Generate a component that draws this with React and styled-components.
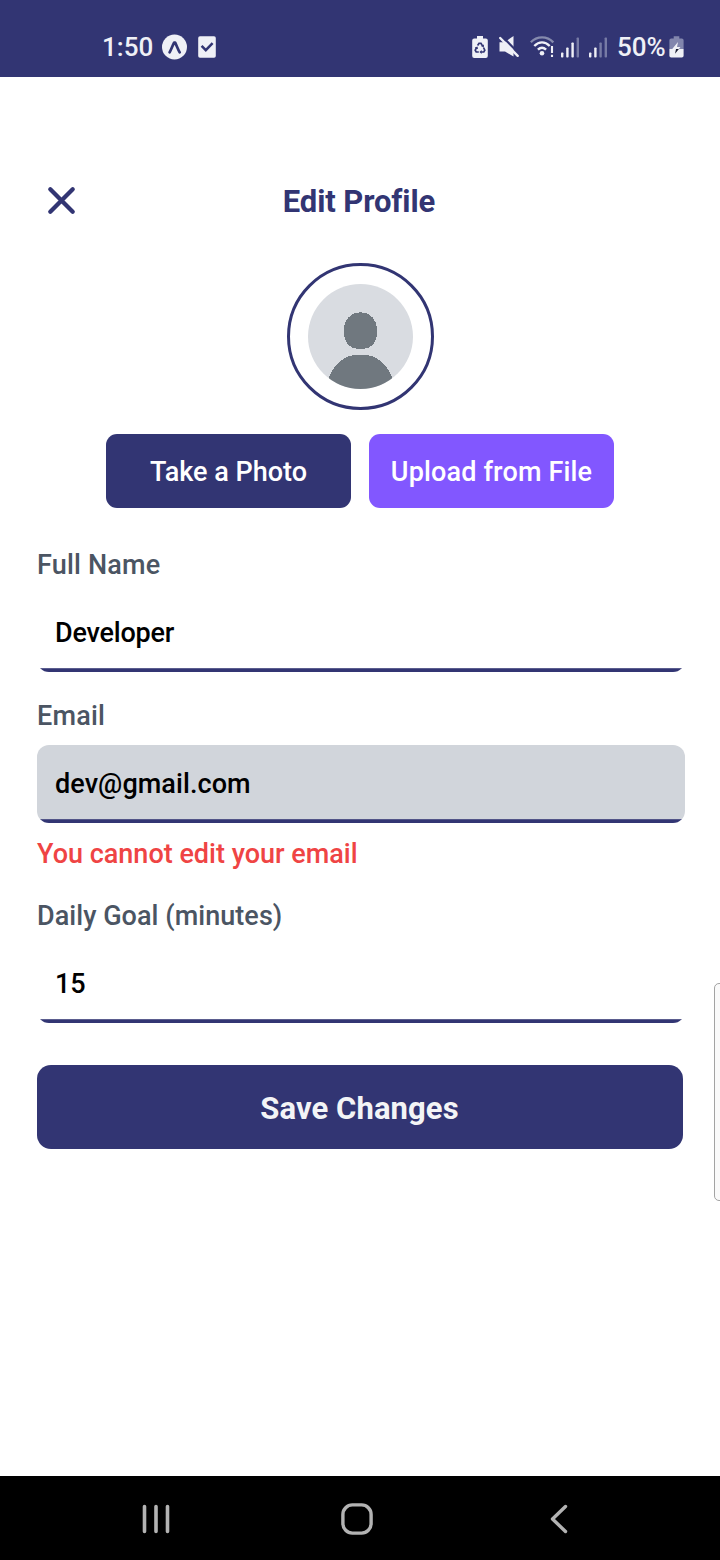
import React from "react";
import styled, { createGlobalStyle } from "styled-components";

const navy = "#323573";
const ink = "#eff0f6";

const GlobalStyle = createGlobalStyle`
  *, *::before, *::after { box-sizing: border-box; }
  body { margin: 0; background: #fff; font-family: Roboto, "Noto Sans", sans-serif; }
  svg { display: block; flex: none; }
`;

const Screen = styled.div`
  position: relative;
  display: flex;
  flex-direction: column;
  width: 720px;
  height: 1560px;
  background: #fff;
  overflow: hidden;
`;

const StatusBar = styled.header`
  display: flex;
  justify-content: space-between;
  height: 77px;
  padding: 32px 36px 15px 102px;
  background: ${navy};
  color: ${ink};
`;

const StatusGroup = styled.div`
  display: flex;
  align-items: center;
  height: 30px;
`;

const StatusText = styled.span`
  width: ${(p) => p.$width}px;
  margin-right: ${(p) => p.$after}px;
  font-size: 26px;
  font-weight: 500;
  line-height: 30px;
  white-space: nowrap;
`;

const StatusIcon = styled.svg`
  margin-right: ${(p) => p.$after || 0}px;
`;

const Content = styled.main`
  flex: 1;
  display: flex;
  flex-direction: column;
  padding: 103px 35px 0 37px;
`;

const TitleRow = styled.div`
  display: grid;
  grid-template-columns: 50px 1fr 50px;
  height: 42px;
  padding-right: 4px;
`;

const CloseButton = styled.button`
  display: flex;
  align-items: flex-start;
  padding: 6px 0 0 10px;
  border: 0;
  background: none;
`;

const Title = styled.h1`
  margin: 0;
  color: ${navy};
  font-size: 31px;
  font-weight: 700;
  line-height: 44px;
  text-align: center;
  letter-spacing: -0.1px;
`;

const Avatar = styled.div`
  display: flex;
  align-items: center;
  justify-content: center;
  width: 147px;
  height: 147px;
  margin: 41px 0 0 250px;
  border: 3px solid ${navy};
  border-radius: 50%;
`;

const PhotoActions = styled.div`
  display: flex;
  gap: 18px;
  margin: 24px 0 0 69px;
`;

const ActionButton = styled.button`
  width: 245px;
  height: 74px;
  padding: 2px 0 0;
  border: 0;
  border-radius: 11px;
  background: ${(p) => p.$color};
  color: #fff;
  font: 500 27px/72px Roboto, sans-serif;
  letter-spacing: ${(p) => p.$spacing || 0}px;
  white-space: nowrap;
`;

const Form = styled.div`
  display: flex;
  flex-direction: column;
  padding-top: 37px;
`;

const Field = styled.div`
  display: flex;
  flex-direction: column;
  margin-bottom: ${(p) => p.$after || 0}px;
`;

const Label = styled.label`
  height: 49px;
  color: #4b5563;
  font-size: 27px;
  font-weight: 500;
  line-height: 40px;
  letter-spacing: ${(p) => p.$spacing || 0}px;
`;

const Input = styled.div`
  height: 78px;
  padding: 0 18px;
  border-radius: 12px;
  background: linear-gradient(to top, ${navy} 3.4px, transparent 3.9px) ${(p) => (p.$disabled ? "#d1d5db" : "#fff")};
  color: #000;
  font-size: 27px;
  font-weight: 500;
  line-height: 78px;
  letter-spacing: ${(p) => p.$spacing || 0}px;
`;

const ErrorText = styled.p`
  height: 61px;
  margin: 0;
  padding-top: 11px;
  color: #ef4444;
  font-size: 27px;
  font-weight: 500;
  line-height: 40px;
`;

const SaveButton = styled.button`
  width: 646px;
  height: 84px;
  margin-top: 42px;
  padding: 3px 1px 0 0;
  border: 0;
  border-radius: 14px;
  background: ${navy};
  color: #f3f4f6;
  font: 700 31px/40px Roboto, sans-serif;
  letter-spacing: 0.08px;
`;

const EdgeHandle = styled.div`
  position: absolute;
  top: 983px;
  right: -8px;
  width: 14px;
  height: 218px;
  border: 1px solid #a3a3a3;
  border-radius: 5px;
  background: #fafafa;
`;

const NavBar = styled.nav`
  display: grid;
  grid-template-columns: 312px 90px 313px;
  align-items: center;
  justify-items: center;
  height: 84px;
  padding-top: 2px;
  background: #000;
`;

const NavIcon = styled.svg`
  fill: none;
  stroke: #b3b3b3;
  stroke-linecap: round;
  stroke-linejoin: round;
`;

function ExpoIcon() {
  return (
    <StatusIcon $after={11} width="25" height="26" viewBox="0 0 25 26">
      <circle cx="12.5" cy="13" r="12.5" fill={ink} />
      <path d="M7.6 18.4C9.2 15.4 10.4 11.9 12.1 8.6h1.1c1.6 3.3 2.8 6.8 4.5 9.8" fill="none" stroke={navy} strokeWidth="2.7" strokeLinecap="round" strokeLinejoin="round" />
    </StatusIcon>
  );
}

function CheckIcon() {
  return (
    <StatusIcon width="18" height="22" viewBox="0 0 18 22">
      <rect x="0.2" y="0.2" width="17.6" height="21.6" rx="1.8" fill={ink} />
      <path d="M3.6 9.8l4.2 4.3 6.8-7" fill="none" stroke={navy} strokeWidth="2.5" />
    </StatusIcon>
  );
}

function RecycleBatteryIcon() {
  return (
    <StatusIcon $after={11} width="16" height="23" viewBox="0 0 16 23">
      <path d="M5 0h6v2.5h2.8a2 2 0 0 1 2 2V20a2 2 0 0 1-2 2H2.2a2 2 0 0 1-2-2V4.5a2 2 0 0 1 2-2H5z" fill={ink} />
      <g fill="none" stroke={navy} strokeWidth="1.7">
        <path d="M5.6 9.5L7 7.4h2l1.7 2.7" />
        <path d="M11.5 11.5l1.3 2.7-1 1.8H9" />
        <path d="M6.8 16H4.2l-1-1.8 1.4-2.7" />
      </g>
      <path d="M11.9 8.4v3.1l-2.9-1.4zM9.6 14v4L7.5 16zM2.8 11.6l2.7-1.2.6 2.9z" fill={navy} />
    </StatusIcon>
  );
}

function MuteIcon() {
  return (
    <StatusIcon $after={11} width="20" height="22" viewBox="0 0 20 22">
      <path d="M0.5 6.2h5L14.5 0v20.5L6 15.5H0.5z" fill={ink} />
      <path d="M2 -0.7L20.5 18" stroke={navy} strokeWidth="2.2" />
      <path d="M0 -1L6 5.500" stroke={navy} strokeWidth="2.4" />
      <path d="M1.2 2L18.7 19.8" stroke={ink} strokeWidth="2.4" strokeLinecap="round" />
    </StatusIcon>
  );
}

function WifiIcon() {
  return (
    <StatusIcon $after={6} width="25" height="22" viewBox="0 0 25 22">
      <g fill="none" strokeWidth="2.4">
        <path d="M0.8 6.3C7 -0.3 17-0.3 23.3 6.3" stroke="#858aad" />
        <path d="M4.3 10C9 5.2 15 5.2 19.7 10" stroke={ink} />
        <path d="M7.9 13.7c2.6-2.5 5.6-2.5 8.2 0" stroke={ink} />
      </g>
      <circle cx="12" cy="17.2" r="2.3" fill={ink} />
      <path d="M22 10v7M22 18.8v2.2" stroke={ink} strokeWidth="2.1" />
    </StatusIcon>
  );
}

function SignalIcon({ strength, after }) {
  const heights = [5, 10, 15, 20];
  return (
    <StatusIcon $after={after} width="18" height="21" viewBox="0 0 18 21">
      {heights.map((h, i) => (
        <rect key={h} x={i * 5.2} y={20.5 - h} width="2.4" height={h} rx="0.8" fill={i < strength ? ink : "#777ba5"} />
      ))}
    </StatusIcon>
  );
}

function ChargingIcon() {
  return (
    <StatusIcon width="15" height="22" viewBox="0 0 15 22">
      <path d="M4.7 0.3h5.6v2.2h2.5a1.8 1.8 0 0 1 1.8 1.8V13H.4V4.3a1.8 1.8 0 0 1 1.8-1.8h2.5z" fill="#8286ad" />
      <path d="M.4 13h14.2v6.700a1.8 1.8 0 0 1-1.8 1.8H2.2A1.8 1.8 0 0 1 .4 19.700z" fill={ink} />
      <path d="M9 6L3.2 13h4.200L6 17.500l5.500-6.600H8z" fill={ink} />
      <path d="M7 13h2.900L6 17.800z" fill="#191b30" />
    </StatusIcon>
  );
}

function Person() {
  return (
    <svg width="105" height="105" viewBox="0 0 106 106" shapeRendering="crispEdges">
      <clipPath id="portrait"><circle cx="53" cy="53" r="53" /></clipPath>
      <g clipPath="url(#portrait)">
        <rect width="106" height="106" fill="#d9dce1" />
        <path d="M53 28.5C63 28.5 70 36.5 70 46.5C70 57.5 65 65.5 56 65.5H50C41 65.5 36 57.5 36 46.5C36 36.5 43 28.5 53 28.5Z" fill="#70787f" />
        <path d="M20 98C25 81 37 71.3 51 71.3H55C69 71.3 81 81 86 98V106H20Z" fill="#70787f" />
      </g>
    </svg>
  );
}

export default function App() {
  return (
    <>
      <GlobalStyle />
      <Screen>
        <StatusBar>
          <StatusGroup>
            <StatusText $width={50} $after={10}>1:50</StatusText>
            <ExpoIcon />
            <CheckIcon />
          </StatusGroup>
          <StatusGroup>
            <RecycleBatteryIcon />
            <MuteIcon />
            <WifiIcon />
            <SignalIcon strength={3} after={10} />
            <SignalIcon strength={2} after={10} />
            <StatusText $width={48} $after={4}>50%</StatusText>
            <ChargingIcon />
          </StatusGroup>
        </StatusBar>
        <Content>
          <TitleRow>
            <CloseButton aria-label="Close">
              <svg width="29" height="29" viewBox="0 0 29 29">
                <path d="M3.3 3.3l22.4 22.4M25.7 3.3L3.3 25.7" stroke={navy} strokeWidth="4.3" strokeLinecap="round" />
              </svg>
            </CloseButton>
            <Title>Edit Profile</Title>
          </TitleRow>
          <Avatar><Person /></Avatar>
          <PhotoActions>
            <ActionButton $color={navy}>Take a Photo</ActionButton>
            <ActionButton $color="#8257ff" $spacing={0.15}>Upload from File</ActionButton>
          </PhotoActions>
          <Form>
            <Field $after={24}>
              <Label $spacing={0.18}>Full Name</Label>
              <Input $spacing={-0.2}>Developer</Input>
            </Field>
            <Field $after={12}>
              <Label $spacing={0.2}>Email</Label>
              <Input $disabled $spacing={0.07}>dev@gmail.com</Input>
              <ErrorText>You cannot edit your email</ErrorText>
            </Field>
            <Field>
              <Label $spacing={0.05}>Daily Goal (minutes)</Label>
              <Input $spacing={-0.2}>15</Input>
            </Field>
          </Form>
          <SaveButton>Save Changes</SaveButton>
        </Content>
        <EdgeHandle />
        <NavBar>
          <NavIcon width="30" height="30" viewBox="0 0 30 30" strokeWidth="3.6">
            <path d="M3.5 2.5v25M15 2.5v25M26.500 2.5v25" />
          </NavIcon>
          <NavIcon width="32" height="32" viewBox="0 0 32 32" strokeWidth="3.4">
            <rect x="1.9" y="1.9" width="28.200" height="28.200" rx="9.500" />
          </NavIcon>
          <NavIcon width="18" height="30" viewBox="0 0 18 30" strokeWidth="3.4">
            <path d="M15.500 2.500L2.500 15l13 12.500" />
          </NavIcon>
        </NavBar>
      </Screen>
    </>
  );
}
